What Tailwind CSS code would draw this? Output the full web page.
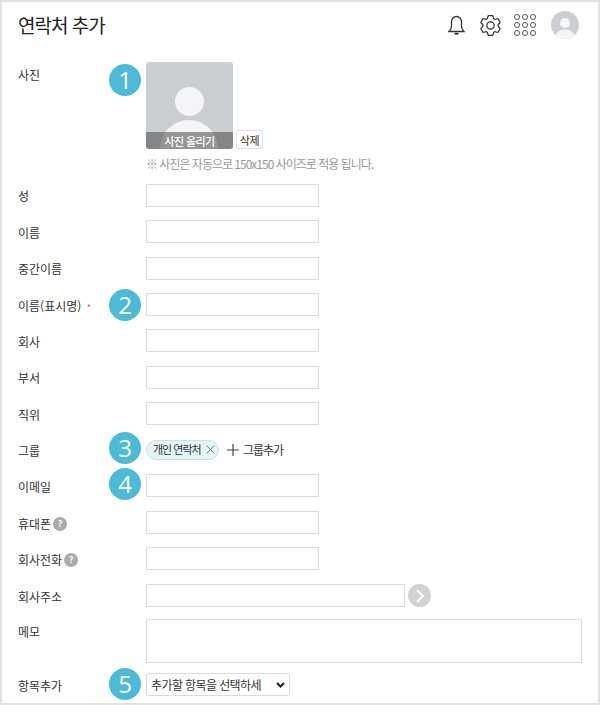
<!DOCTYPE html>
<html lang="ko">
<head>
  <meta charset="UTF-8">
  <title>연락처 추가</title>
  <script src="https://cdn.jsdelivr.net/npm/@tailwindcss/browser@4"></script>
</head>
<body class="bg-white text-[#333] font-['Noto_Sans_CJK_KR','Noto_Sans',sans-serif] text-[12px]">
  <div class="w-[600px] h-[705px] border-2 border-t-2 border-[#e2e2e2] overflow-hidden">
    <!-- header -->
    <header class="flex items-center justify-between h-[46px] pl-[16px] pr-[19px]">
      <h1 class="text-[19px] tracking-[-1px] leading-[44px] text-[#222] font-normal">연락처 추가</h1>
      <div class="flex items-center">
        <svg class="w-[17px] h-[20px] mr-[15px]" viewBox="0 0 17 20" fill="none" stroke="#333" stroke-width="1.3"><path d="M1 16.500h15c-1.500-1.500-2.500-3-2.500-5.500V6.800a5 5.300 0 0 0-10 0V11c0 2.500-1 4-2.500 5.500z"/><path d="M6.500 18.700h4" stroke-width="1.800"/></svg>
        <svg class="w-[21px] h-[21px] mr-[13px]" viewBox="2.500 2.500 19 19" fill="none" stroke="#333" stroke-width="1.150"><path d="M9.594 3.940c.09-.542.56-.94 1.110-.94h2.593c.55 0 1.020.398 1.110.94l.213 1.281c.063.374.313.686.645.870.074.04.147.083.22.127.325.196.72.257 1.075.124l1.217-.456a1.125 1.125 0 0 1 1.370.49l1.296 2.247a1.125 1.125 0 0 1-.26 1.431l-1.003.827c-.293.241-.438.613-.43.992a7.723 7.723 0 0 1 0 .255c-.008.378.137.75.43.991l1.004.827c.424.35.534.955.26 1.430l-1.298 2.247a1.125 1.125 0 0 1-1.369.491l-1.217-.456c-.355-.133-.75-.072-1.076.124a6.470 6.470 0 0 1-.22.128c-.331.183-.581.495-.644.869l-.213 1.281c-.09.543-.56.94-1.110.94h-2.594c-.55 0-1.019-.398-1.110-.94l-.213-1.281c-.062-.374-.312-.686-.644-.87a6.520 6.520 0 0 1-.22-.127c-.325-.196-.72-.257-1.076-.124l-1.217.456a1.125 1.125 0 0 1-1.369-.49l-1.297-2.247a1.125 1.125 0 0 1 .26-1.431l1.004-.827c.292-.24.437-.613.43-.991a6.932 6.932 0 0 1 0-.255c.007-.38-.138-.751-.43-.992l-1.004-.827a1.125 1.125 0 0 1-.26-1.430l1.297-2.247a1.125 1.125 0 0 1 1.370-.491l1.216.456c.356.133.751.072 1.076-.124.072-.044.146-.086.22-.128.332-.183.582-.495.644-.869l.214-1.280Z"/><circle cx="12" cy="12" r="3.300"/></svg>
        <div class="grid grid-cols-3 gap-[2px] mr-[15px]">
          <i class="w-[6px] h-[6px] rounded-full border-[1.5px] border-[#555]"></i><i class="w-[6px] h-[6px] rounded-full border-[1.5px] border-[#555]"></i><i class="w-[6px] h-[6px] rounded-full border-[1.5px] border-[#555]"></i>
          <i class="w-[6px] h-[6px] rounded-full border-[1.5px] border-[#555]"></i><i class="w-[6px] h-[6px] rounded-full border-[1.5px] border-[#555]"></i><i class="w-[6px] h-[6px] rounded-full border-[1.5px] border-[#555]"></i>
          <i class="w-[6px] h-[6px] rounded-full border-[1.5px] border-[#555]"></i><i class="w-[6px] h-[6px] rounded-full border-[1.5px] border-[#555]"></i><i class="w-[6px] h-[6px] rounded-full border-[1.5px] border-[#555]"></i>
        </div>
        <svg class="w-[28px] h-[28px]" viewBox="0 0 28 28"><defs><clipPath id="av"><circle cx="14" cy="14" r="14"/></clipPath></defs><g clip-path="url(#av)"><rect width="28" height="28" fill="#cbced3"/><circle cx="14" cy="12" r="5" fill="#f6f6f8"/><ellipse cx="14" cy="26" rx="10" ry="7.500" fill="#f6f6f8"/></g></svg>
      </div>
    </header>

    <main class="pl-[16px] pt-[14px]">
      <!-- photo -->
      <div class="relative flex h-[122px]">
        <label class="w-[128px] pt-[4px] leading-[18px]">사진</label>
        <span class="absolute left-[91px] top-[2px] w-[32px] h-[32px] rounded-full bg-[#4dbbd7] text-white text-[24px] font-medium leading-[32px] text-center font-['Open_Sans',sans-serif]">1</span>
        <div>
          <div class="flex items-end">
            <div class="relative w-[87px] h-[87px] rounded-[3px] bg-[#cbced3] overflow-hidden">
              <div class="absolute left-[29px] top-[25px] w-[29px] h-[29px] rounded-full bg-[#f5f5f7]"></div>
              <div class="absolute left-[14px] top-[58px] w-[58px] h-[50px] rounded-t-full bg-[#f5f5f7]"></div>
              <div class="absolute left-0 bottom-0 w-full h-[17px] bg-[#555]/60 text-white text-center text-[11px] font-medium tracking-[-0.6px] leading-[19px]">사진 올리기</div>
            </div>
            <button class="ml-[3px] w-[27px] h-[19px] border border-[#e2e2e2] rounded-[1px] bg-white text-[11px] tracking-[-0.4px] leading-[18px] text-[#333]">삭제</button>
          </div>
          <p class="mt-[8px] text-[#999] text-[12px] leading-[14px] tracking-[-1px]">※ 사진은 자동으로 150x150 사이즈로 적용 됩니다.</p>
        </div>
      </div>

      <div class="flex items-center h-[23px]"><label class="w-[128px]">성</label><input class="w-[173px] h-[23px] border border-[#dcdcdc]"></div>
      <div class="flex items-center h-[23px] mt-[13px]"><label class="w-[128px] pt-[2px]">이름</label><input class="w-[173px] h-[23px] border border-[#dcdcdc]"></div>
      <div class="flex items-center h-[23px] mt-[14px]"><label class="w-[128px]">중간이름</label><input class="w-[173px] h-[23px] border border-[#dcdcdc]"></div>
      <div class="relative flex items-center h-[23px] mt-[13px]">
        <label class="w-[128px] pt-[2px]">이름(표시명) <span class="ml-[2px] text-[#e5533d] text-[9px]">*</span></label>
        <span class="absolute left-[91px] top-[-4px] w-[32px] h-[32px] rounded-full bg-[#4dbbd7] text-white text-[24px] font-medium leading-[32px] text-center font-['Open_Sans',sans-serif]">2</span>
        <input class="w-[173px] h-[23px] border border-[#dcdcdc]">
      </div>
      <div class="flex items-center h-[23px] mt-[13px]"><label class="w-[128px] pt-[2px]">회사</label><input class="w-[173px] h-[23px] border border-[#dcdcdc]"></div>
      <div class="flex items-center h-[23px] mt-[14px]"><label class="w-[128px]">부서</label><input class="w-[173px] h-[23px] border border-[#dcdcdc]"></div>
      <div class="flex items-center h-[23px] mt-[13px]"><label class="w-[128px] pt-[2px]">직위</label><input class="w-[173px] h-[23px] border border-[#dcdcdc]"></div>

      <div class="relative flex items-center h-[23px] mt-[13px]">
        <label class="w-[128px] pt-[2px]">그룹</label>
        <span class="absolute left-[91px] top-[-6px] w-[32px] h-[32px] rounded-full bg-[#4dbbd7] text-white text-[24px] font-medium leading-[32px] text-center font-['Open_Sans',sans-serif]">3</span>
        <div class="flex items-center">
          <span class="flex items-center h-[20px] w-[73px] pl-[6px] rounded-full border border-[#c5e3ea] bg-[#e3f4f7] text-[11px] tracking-[-1px]">개인 연락처
            <svg class="w-[9px] h-[9px] ml-[5px]" viewBox="0 0 9 9" stroke="#777" fill="none"><path d="M.5.5l8 8M8.500.5l-8 8"/></svg>
          </span>
          <svg class="w-[12px] h-[12px] ml-[8px]" viewBox="0 0 12 12" stroke="#444" stroke-width="1.2"><path d="M6 0v12M0 6h12"/></svg>
          <span class="ml-[4px] leading-[14px] tracking-[-1px]">그룹추가</span>
        </div>
      </div>
      <div class="relative flex items-center h-[23px] mt-[13px]">
        <label class="w-[128px] pt-[3px]">이메일</label>
        <span class="absolute left-[91px] top-[-6px] w-[32px] h-[32px] rounded-full bg-[#4dbbd7] text-white text-[24px] font-medium leading-[32px] text-center font-['Open_Sans',sans-serif]">4</span>
        <input class="w-[173px] h-[23px] border border-[#dcdcdc]">
      </div>
      <div class="flex items-center h-[23px] mt-[14px]">
        <label class="w-[128px] flex items-center pt-[3px]">휴대폰<span class="ml-[2px] w-[14px] h-[14px] rounded-full bg-[#aaa] text-white text-[9px] leading-[14px] text-center font-bold">?</span></label>
        <input class="w-[173px] h-[23px] border border-[#dcdcdc]">
      </div>
      <div class="flex items-center h-[23px] mt-[13px]">
        <label class="w-[128px] flex items-center pt-[2px]">회사전화<span class="ml-[2px] w-[14px] h-[14px] rounded-full bg-[#aaa] text-white text-[9px] leading-[14px] text-center font-bold">?</span></label>
        <input class="w-[173px] h-[23px] border border-[#dcdcdc]">
      </div>
      <div class="flex items-center h-[23px] mt-[14px]">
        <label class="w-[128px] pt-[2px]">회사주소</label>
        <input class="w-[259px] h-[23px] border border-[#dcdcdc]">
        <span class="ml-[3px] w-[23px] h-[23px] rounded-full bg-[#d2d2d2] flex items-center justify-center">
          <svg class="w-[10px] h-[14px]" viewBox="0 0 10 14" fill="none" stroke="#fff" stroke-width="2"><path d="M2 1l6 6-6 6"/></svg>
        </span>
      </div>
      <div class="flex h-[44px] mt-[12px]">
        <label class="w-[128px] pt-[4px] leading-[18px]">메모</label>
        <textarea class="w-[436px] h-[44px] border border-[#dcdcdc] resize-none"></textarea>
      </div>
      <div class="relative flex items-center h-[23px] mt-[10px]">
        <label class="w-[128px] pt-[2px]">항목추가</label>
        <span class="absolute left-[91px] top-[-5px] w-[32px] h-[32px] rounded-full bg-[#4dbbd7] text-white text-[24px] font-medium leading-[32px] text-center font-['Open_Sans',sans-serif]">5</span>
        <div class="relative">
          <select class="appearance-none block w-[144px] h-[23px] border border-[#dcdcdc] rounded-[2px] bg-white pl-[4px] pr-[26px] text-[12px] tracking-[-0.6px]"><option>추가할 항목을 선택하세</option></select>
          <svg class="absolute left-[130px] top-[9px] w-[9px] h-[6px]" viewBox="0 0 9 6" fill="none" stroke="#222" stroke-width="2"><path d="M1 1l3.500 3.500L8 1"/></svg>
        </div>
      </div>
    </main>
  </div>
</body>
</html>
